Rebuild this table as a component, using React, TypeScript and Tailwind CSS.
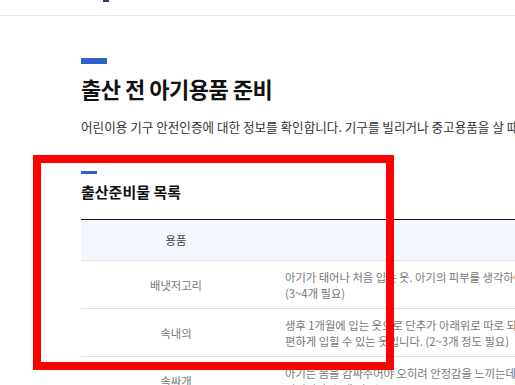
const rows = [
  {
    name: "배냇저고리",
    lines: [
      "아기가 태어나 처음 입는 옷. 아기의 피부를 생각하여 면 소재로 된 것을 준비합니다.",
      "(3~4개 필요)",
    ],
  },
  {
    name: "속내의",
    lines: [
      "생후 1개월에 입는 옷으로 단추가 아래위로 따로 되어 있어 기저귀를 갈 때",
      "편하게 입힐 수 있는 옷입니다. (2~3개 정도 필요)",
    ],
  },
  {
    name: "속싸개",
    lines: [
      "아기는 몸을 감싸주어야 오히려 안정감을 느끼는데 이때 아기를 감싸주는",
      "것입니다. (2개 필요)",
    ],
  },
];

export default function App() {
  return (
    <div
      className="relative w-[515px] h-[385px] overflow-hidden bg-white text-[#111]"
      style={{ fontFamily: '"Noto Sans CJK KR", "Noto Sans", sans-serif' }}
    >
      {/* top bar, mostly cut off */}
      <div className="h-[16px] border-b border-[#e8e8e8] pl-[103px]">
        <div className="w-[6px] h-[2px] bg-[#2a3a7c]" />
      </div>

      <div className="pl-[81px] pt-[42px] w-[900px]">
        <div className="w-[26px] h-[6px] bg-[#2f62c6]" />
        <h1 className="mt-[8px] text-[22px] leading-[32px] font-bold tracking-[-0.5px]">
          출산 전 아기용품 준비
        </h1>
        <p className="mt-[13px] text-[12.6px] leading-[20px] text-[#333] whitespace-nowrap">
          어린이용 기구 안전인증에 대한 정보를 확인합니다. 기구를 빌리거나 중고용품을 살 때 참고하세요.
        </p>

        <div className="mt-[34px] w-[16px] h-[3px] bg-[#2f62c6]" />
        <h2 className="mt-[7px] text-[15px] leading-[22px] font-bold">출산준비물 목록</h2>

        <div className="mt-[16px] border-t border-[#111] w-[700px]">
          <div className="flex h-[41px] items-center bg-[#f4f8fe] border-b border-[#e2e2e2] text-[11.3px] text-[#444]">
            <div className="w-[190px] text-center">용품</div>
            <div className="flex-1" />
          </div>
          {rows.map((r) => (
            <div
              key={r.name}
              className="flex items-center border-b border-[#e2e2e2] pt-[8px] pb-[7px] text-[11.3px] leading-[16px] text-[#777]"
            >
              <div className="w-[190px] text-center">{r.name}</div>
              <div className="flex-1 pl-[14px] whitespace-nowrap">
                {r.lines.map((l) => (
                  <div key={l}>{l}</div>
                ))}
              </div>
            </div>
          ))}
        </div>
      </div>

      {/* red highlight box */}
      <div className="absolute left-[33px] top-[155px] w-[361px] h-[215px] border-8 border-[#ff0000]" />
    </div>
  );
}
